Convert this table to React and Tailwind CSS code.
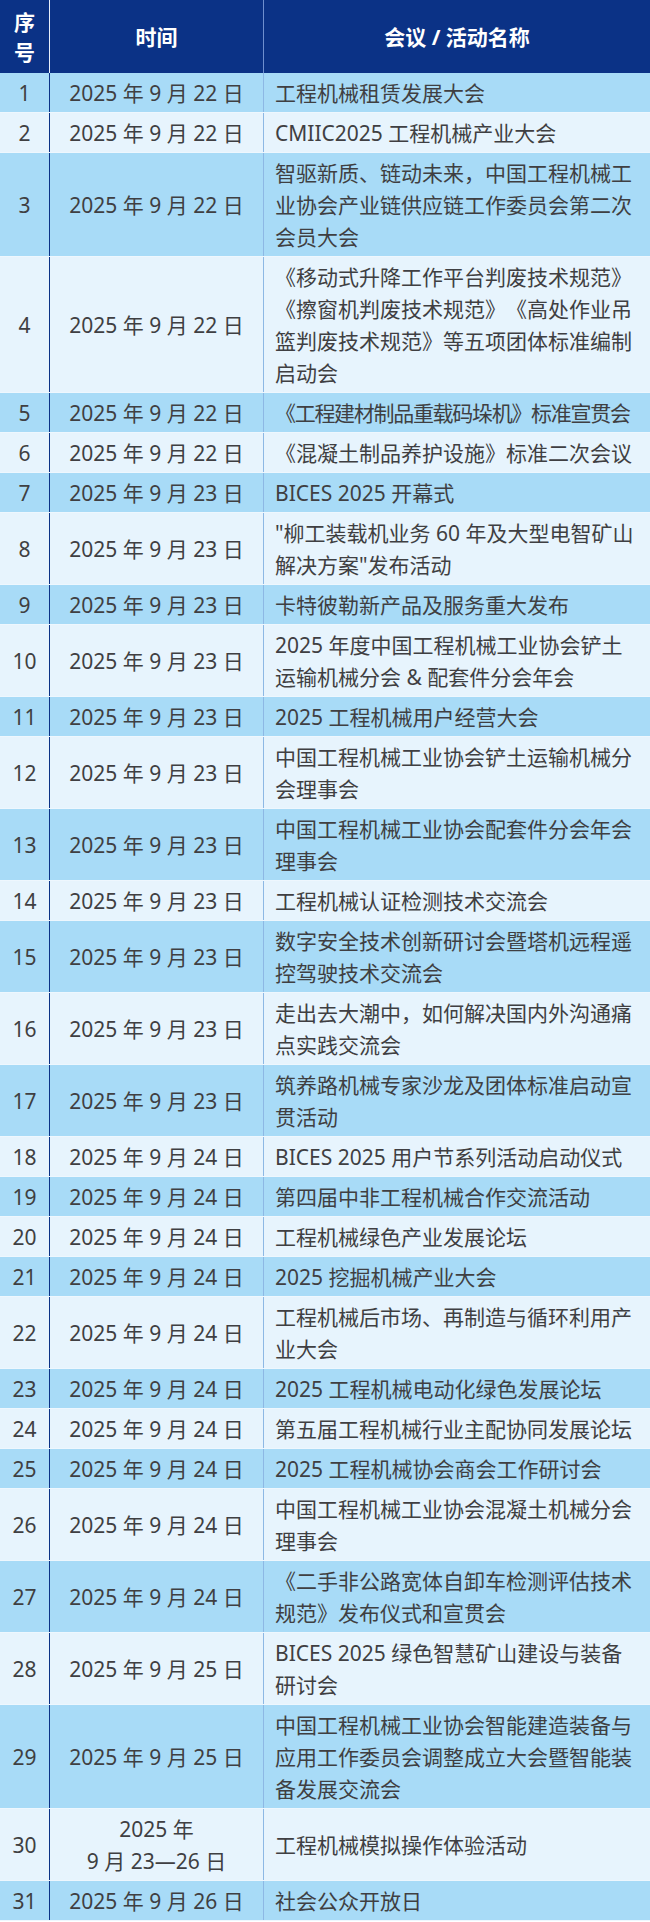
const rows = [
  ['1', '2025 年 9 月 22 日', ['工程机械租赁发展大会']],
  ['2', '2025 年 9 月 22 日', ['CMIIC2025 工程机械产业大会']],
  ['3', '2025 年 9 月 22 日', ['智驱新质、链动未来，中国工程机械工', '业协会产业链供应链工作委员会第二次', '会员大会']],
  ['4', '2025 年 9 月 22 日', ['《移动式升降工作平台判废技术规范》', '《擦窗机判废技术规范》《高处作业吊', '篮判废技术规范》等五项团体标准编制', '启动会']],
  ['5', '2025 年 9 月 22 日', ['《工程建材制品重载码垛机》标准宣贯会'], true],
  ['6', '2025 年 9 月 22 日', ['《混凝土制品养护设施》标准二次会议']],
  ['7', '2025 年 9 月 23 日', ['BICES 2025 开幕式']],
  ['8', '2025 年 9 月 23 日', ['"柳工装载机业务 60 年及大型电智矿山', '解决方案"发布活动']],
  ['9', '2025 年 9 月 23 日', ['卡特彼勒新产品及服务重大发布']],
  ['10', '2025 年 9 月 23 日', ['2025 年度中国工程机械工业协会铲土', '运输机械分会 & 配套件分会年会']],
  ['11', '2025 年 9 月 23 日', ['2025 工程机械用户经营大会']],
  ['12', '2025 年 9 月 23 日', ['中国工程机械工业协会铲土运输机械分', '会理事会']],
  ['13', '2025 年 9 月 23 日', ['中国工程机械工业协会配套件分会年会', '理事会']],
  ['14', '2025 年 9 月 23 日', ['工程机械认证检测技术交流会']],
  ['15', '2025 年 9 月 23 日', ['数字安全技术创新研讨会暨塔机远程遥', '控驾驶技术交流会']],
  ['16', '2025 年 9 月 23 日', ['走出去大潮中，如何解决国内外沟通痛', '点实践交流会']],
  ['17', '2025 年 9 月 23 日', ['筑养路机械专家沙龙及团体标准启动宣', '贯活动']],
  ['18', '2025 年 9 月 24 日', ['BICES 2025 用户节系列活动启动仪式']],
  ['19', '2025 年 9 月 24 日', ['第四届中非工程机械合作交流活动']],
  ['20', '2025 年 9 月 24 日', ['工程机械绿色产业发展论坛']],
  ['21', '2025 年 9 月 24 日', ['2025 挖掘机械产业大会']],
  ['22', '2025 年 9 月 24 日', ['工程机械后市场、再制造与循环利用产', '业大会']],
  ['23', '2025 年 9 月 24 日', ['2025 工程机械电动化绿色发展论坛']],
  ['24', '2025 年 9 月 24 日', ['第五届工程机械行业主配协同发展论坛']],
  ['25', '2025 年 9 月 24 日', ['2025 工程机械协会商会工作研讨会']],
  ['26', '2025 年 9 月 24 日', ['中国工程机械工业协会混凝土机械分会', '理事会']],
  ['27', '2025 年 9 月 24 日', ['《二手非公路宽体自卸车检测评估技术', '规范》发布仪式和宣贯会']],
  ['28', '2025 年 9 月 25 日', ['BICES 2025 绿色智慧矿山建设与装备', '研讨会']],
  ['29', '2025 年 9 月 25 日', ['中国工程机械工业协会智能建造装备与', '应用工作委员会调整成立大会暨智能装', '备发展交流会']],
  ['30', ['2025 年', '9 月 23—26 日'], ['工程机械模拟操作体验活动']],
  ['31', '2025 年 9 月 26 日', ['社会公众开放日']],
];

const font = { fontFamily: '"Noto Sans", "Noto Sans CJK SC", sans-serif' };

export default function App() {
  return (
    <div className="w-[650px] bg-white overflow-hidden [text-spacing-trim:space-all]" style={font}>
      <div className="grid grid-cols-[50px_214px_1fr] bg-[#0b3286] text-white font-bold text-[21px] leading-[30px] h-[73px]">
        <div className="flex flex-col items-center justify-center border-r border-[#e8eefa]">
          <span>序</span>
          <span>号</span>
        </div>
        <div className="flex items-center justify-center border-r border-[#6f8fce]">时间</div>
        <div className="flex items-center justify-center">会议 / 活动名称</div>
      </div>
      {rows.map(([no, date, lines, tight], i) => (
        <div
          key={no}
          className={`grid grid-cols-[50px_214px_1fr] text-[#3f3f42] text-[21px] leading-[32px] border-b border-[#eef7fe] ${
            i % 2 === 0 ? 'bg-[#a8dbf7]' : 'bg-[#e7f4fd]'
          }`}
        >
          <div className="flex items-center justify-center border-r border-[#0b3286] pt-[4px] pb-[3px]">{no}</div>
          <div className="flex flex-col items-center justify-center text-center border-r border-[#8db8e4] pt-[4px] pb-[3px]">
            {Array.isArray(date) ? date.map((d) => <span key={d}>{d}</span>) : date}
          </div>
          <div className={`flex flex-col justify-center pl-[11px] pt-[4px] pb-[3px] whitespace-nowrap overflow-hidden ${tight ? 'tracking-[-1.3px]' : ''}`}>
            {lines.map((l) => (
              <span key={l}>{l}</span>
            ))}
          </div>
        </div>
      ))}
    </div>
  );
}
